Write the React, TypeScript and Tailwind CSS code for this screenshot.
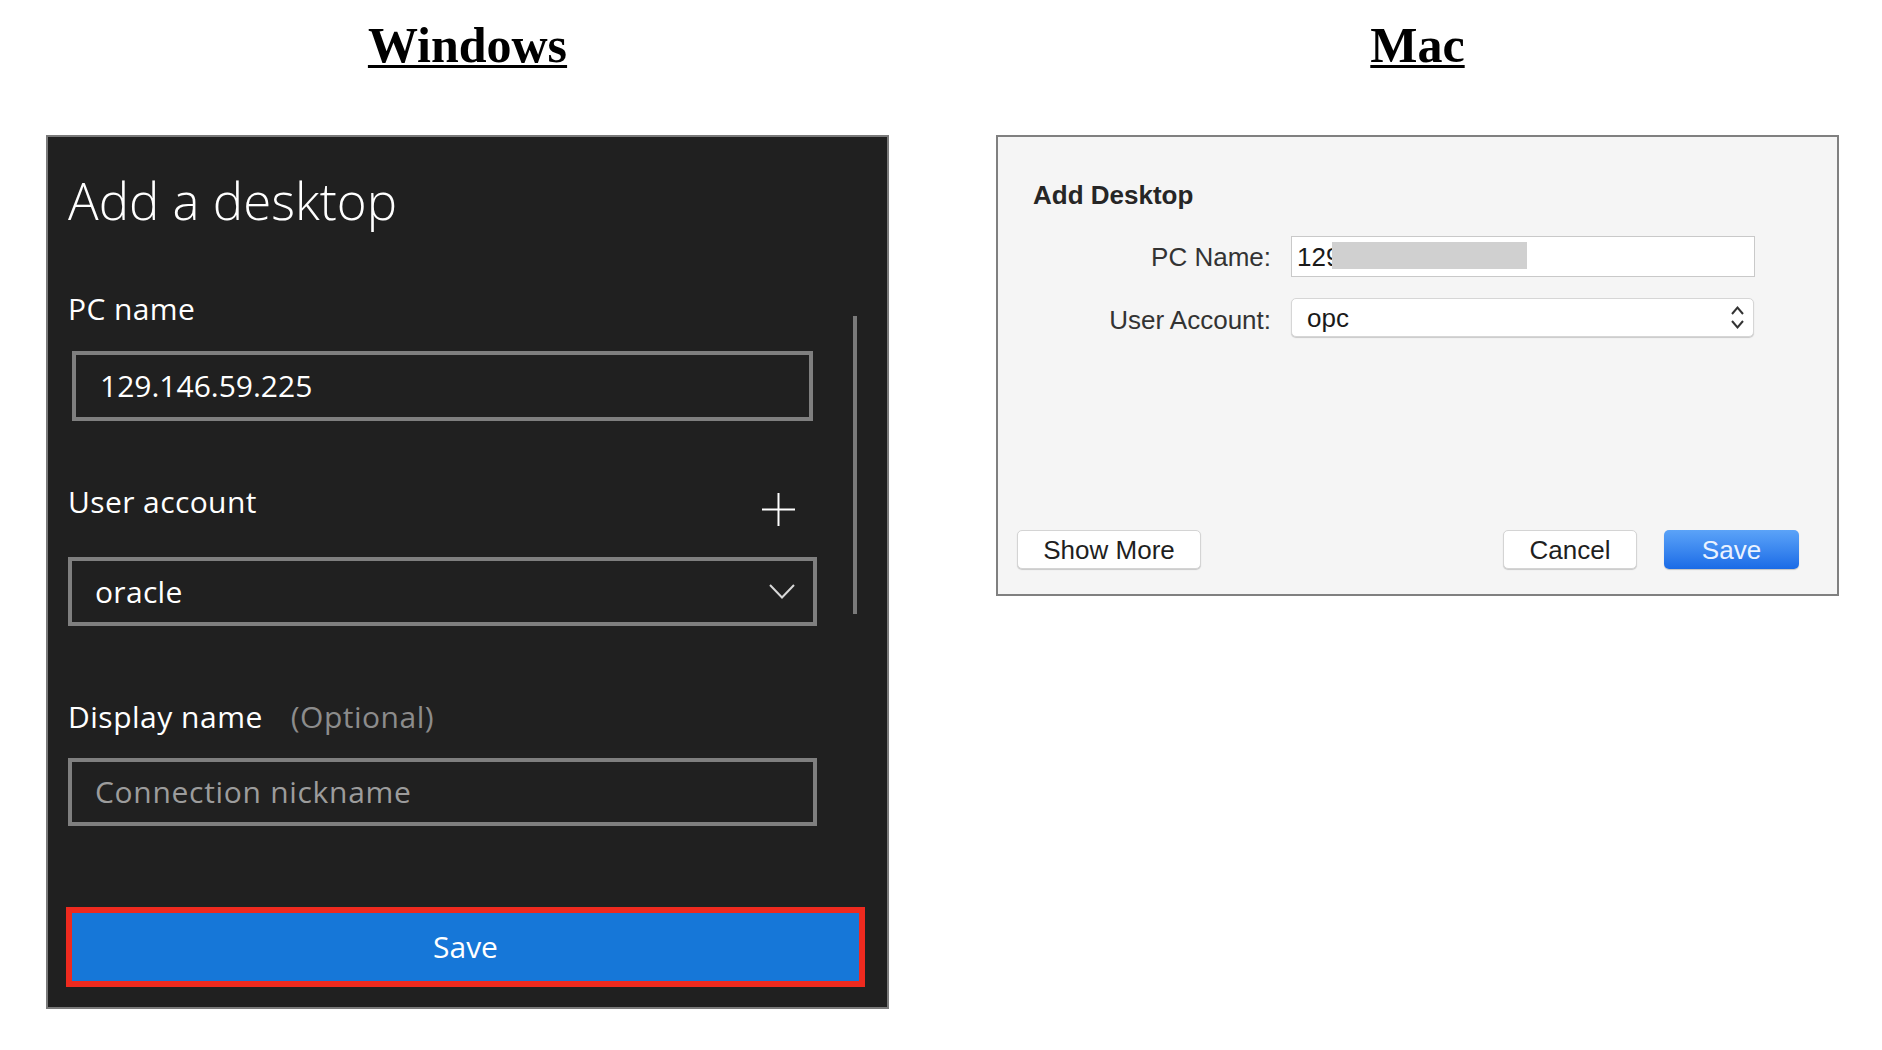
import React from "react";

const win = { fontFamily: '"Open Sans", "Noto Sans", sans-serif' };
const mac = { fontFamily: '"Liberation Sans", Arial, sans-serif' };
const serif = { fontFamily: '"Liberation Serif", "Times New Roman", serif' };

function Title({ children }: { children: React.ReactNode }) {
  return (
    <div className="h-[135px] pt-[20px] text-center">
      <span
        style={serif}
        className="text-[50px] leading-[50px] font-bold text-black underline decoration-[3px] underline-offset-[3px]"
      >
        {children}
      </span>
    </div>
  );
}

function WindowsPanel() {
  return (
    <div
      style={win}
      className="relative h-[874px] w-[843px] border-2 border-[#7a7a7a] bg-[#202020] pl-[20px] text-white flex flex-col"
    >
      <div className="mt-[33px] text-[51px] leading-[60px] font-light">Add a desktop</div>

      <div className="mt-[61px] text-[30px] leading-[36px] tracking-[0.4px]">PC name</div>

      <div className="mt-[24px] ml-[4px] h-[70px] w-[741px] border-4 border-[#7f7f7f] flex items-center pl-[24px] text-[30px] leading-[40px]">
        129.146.59.225
      </div>

      <div className="mt-[63px] w-[749px] h-[36px] flex items-start justify-between">
        <span className="text-[30px] leading-[36px] tracking-[0.4px]">User account</span>
        <svg width="33" height="33" viewBox="0 0 33 33" className="mt-[9px] mr-[22px]">
          <line x1="16.5" y1="0" x2="16.5" y2="33" stroke="#ffffff" strokeWidth="2" />
          <line x1="0" y1="16.5" x2="33" y2="16.5" stroke="#ffffff" strokeWidth="2" />
        </svg>
      </div>

      <div className="mt-[37px] h-[69px] w-[749px] border-4 border-[#7f7f7f] flex items-center justify-between pl-[23px] pr-[18px]">
        <span className="text-[30px] leading-[40px] tracking-[0.3px]">oracle</span>
        <svg width="26" height="15" viewBox="0 0 26 15">
          <polyline points="1,1 13,13.5 25,1" fill="none" stroke="#d8d8d8" strokeWidth="2" />
        </svg>
      </div>

      <div className="mt-[73px] text-[30px] leading-[36px] tracking-[0.5px] flex">
        <span>Display name</span>
        <span className="ml-[28px] text-[#8c8c8c]">(Optional)</span>
      </div>

      <div className="mt-[23px] h-[68px] w-[749px] border-4 border-[#7f7f7f] flex items-center pl-[23px] text-[30px] leading-[40px] tracking-[0.7px] text-[#9c9c9c]">
        Connection nickname
      </div>

      <div className="mt-[81px] -ml-[2px] h-[80px] w-[799px] border-[6px] border-[#ee2a1f] bg-[#1677d8] flex items-center justify-center text-[30px] leading-[40px]">
        Save
      </div>

      <div className="absolute left-[805px] top-[179px] h-[298px] w-[4px] bg-[#7a7a7a]" />
    </div>
  );
}

function MacPanel() {
  return (
    <div
      style={mac}
      className="h-[461px] w-[843px] border-2 border-[#808080] bg-[#f5f5f5] flex flex-col text-[#2b2b2b]"
    >
      <div className="mt-[43px] pl-[35px] text-[26px] leading-[30px] font-bold text-[#262626]">Add Desktop</div>

      <div className="mt-[26px] flex items-center">
        <div className="w-[273px] text-right text-[26px] leading-[30px] text-[#333]">PC Name:</div>
        <div className="relative ml-[20px] h-[41px] w-[464px] border border-[#c9c9c9] bg-white flex items-center pl-[5px] text-[26px] leading-[30px] text-[#1a1a1a]">
          129
          <div className="absolute left-[40px] top-[5px] h-[27px] w-[195px] bg-[#d0d0d0]" />
        </div>
      </div>

      <div className="mt-[21px] flex items-center">
        <div className="w-[273px] text-right text-[26px] leading-[30px] text-[#333] pt-[4px]">User Account:</div>
        <div className="ml-[20px] h-[39px] w-[463px] rounded-[5px] border border-[#d6d6d6] bg-white shadow-[0_1px_1px_rgba(0,0,0,0.18)] flex items-center justify-between pl-[15px] pr-[8px] text-[26px] leading-[30px] text-[#1a1a1a]">
          <span>opc</span>
          <svg width="15" height="25" viewBox="0 0 15 25">
            <polyline points="2,9 7.5,2.5 13,9" fill="none" stroke="#333333" strokeWidth="2" />
            <polyline points="2,16 7.5,22.5 13,16" fill="none" stroke="#333333" strokeWidth="2" />
          </svg>
        </div>
      </div>

      <div className="mt-auto mb-[25px] flex items-center pl-[19px] pr-[38px]">
        <div className="h-[39px] w-[184px] rounded-[5px] border border-[#d4d4d4] bg-white shadow-[0_1px_1px_rgba(0,0,0,0.18)] flex items-center justify-center text-[26px] leading-[30px] text-[#1f1f1f]">
          Show More
        </div>
        <div className="ml-auto h-[39px] w-[134px] rounded-[5px] border border-[#d4d4d4] bg-white shadow-[0_1px_1px_rgba(0,0,0,0.18)] flex items-center justify-center text-[26px] leading-[30px] text-[#1f1f1f]">
          Cancel
        </div>
        <div className="ml-[27px] h-[39px] w-[135px] rounded-[5px] bg-gradient-to-b from-[#5ba3f8] to-[#1a6be6] shadow-[0_1px_1px_rgba(0,0,0,0.2)] flex items-center justify-center text-[26px] leading-[30px] text-[#eaf2ff]">
          Save
        </div>
      </div>
    </div>
  );
}

export default function App() {
  return (
    <div className="w-[1882px] h-[1050px] bg-white flex pl-[46px] gap-[107px]">
      <div className="w-[843px] flex flex-col">
        <Title>Windows</Title>
        <WindowsPanel />
      </div>
      <div className="w-[843px] flex flex-col">
        <Title>Mac</Title>
        <MacPanel />
      </div>
    </div>
  );
}
